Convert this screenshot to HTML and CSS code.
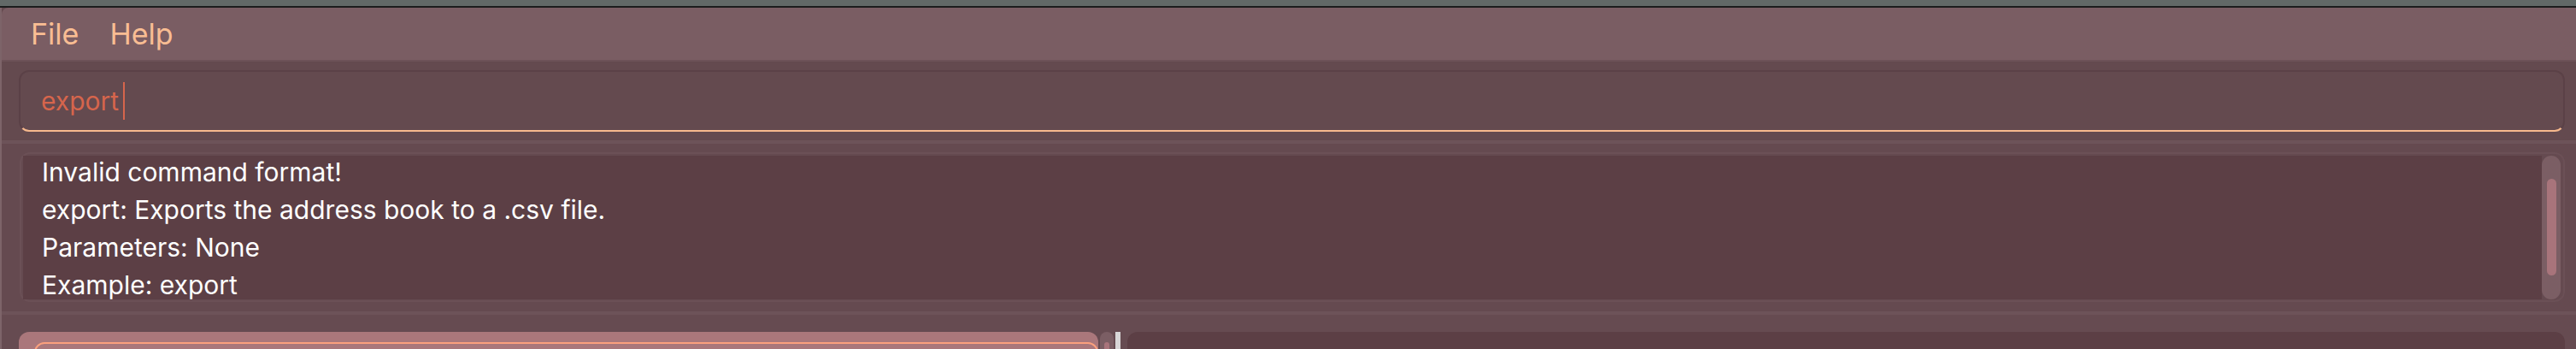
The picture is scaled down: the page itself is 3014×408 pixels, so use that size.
FILE: index.html
```html
<!DOCTYPE html>
<html lang="en">
<head>
<meta charset="utf-8">
<title>Address Book</title>
<link rel="stylesheet" href="styles.css">
</head>
<body>
<div class="titlebar"></div>
<div class="app">
  <div class="menubar">
    <span class="menu-item">File</span>
    <span class="menu-item">Help</span>
  </div>
  <div class="command-area">
    <div class="command-field">
      <span class="command-text">export</span><span class="caret"></span>
    </div>
  </div>
  <div class="separator"></div>
  <div class="result-area">
    <div class="result-panel">
      <div class="result-text">
        <div class="result-lines">
          <div>Invalid command format!</div>
          <div>export: Exports the address book to a .csv file.</div>
          <div>Parameters: None</div>
          <div>Example: export</div>
        </div>
      </div>
      <div class="scroll-track"><div class="scroll-thumb"></div></div>
    </div>
  </div>
  <div class="separator"></div>
  <div class="bottom-area">
    <div class="list-panel">
      <div class="person-card"></div>
    </div>
    <div class="list-scroll"><div class="list-scroll-thumb"></div></div>
    <div class="divider"></div>
    <div class="detail-panel"></div>
  </div>
</div>
</body>
</html>
```
FILE: styles.css
```css
* { box-sizing: border-box; }

html, body {
  margin: 0;
  padding: 0;
  width: 3014px;
  height: 408px;
  overflow: hidden;
  background: #644a4f;
  font-family: Inter, "Open Sans", sans-serif;
}

.titlebar {
  height: 9px;
  background: #626967;
  border-bottom: 2px solid #1c1d1d;
}

.app {
  border-left: 2px solid #7d6469;
  display: flex;
  flex-direction: column;
  height: 399px;
}

.app > * { flex-shrink: 0; }

.menubar {
  height: 63px;
  background: #7a5d63;
  border-top-left-radius: 8px;
  border-bottom: 2px solid #6d5258;
  display: flex;
  align-items: center;
  gap: 36px;
  padding-left: 34px;
}

.menu-item {
  color: #f9bd93;
  font-size: 34px;
  line-height: 1;
}

.command-area {
  height: 92px;
  background: #644a4f;
  padding: 10px 13px 10px 20px;
}

.command-field {
  height: 72px;
  border: 2px solid #5b4147;
  border-bottom: 2px solid #f7b98d;
  border-radius: 12px;
  display: flex;
  align-items: center;
  padding-left: 24px;
}

.command-text {
  color: #d6654c;
  font-size: 30px;
  line-height: 1;
}

.caret {
  display: inline-block;
  width: 2px;
  height: 44px;
  margin-left: 5px;
  background: #d6654c;
}

.separator {
  height: 4px;
  background: #6d5359;
}

.result-area {
  height: 196px;
  background: #654a50;
  padding: 10px 13px 11px 21px;
}

.result-panel {
  height: 175px;
  border: 2px solid #6b5056;
  border-radius: 12px;
  padding: 2px 3px 1px 2px;
  display: flex;
  background: #654a50;
}

.result-text {
  flex: 1;
  background: #5c3f45;
  overflow: hidden;
  padding-left: 22px;
}

.result-lines {
  margin-top: -3px;
  color: #ffffff;
  font-size: 30px;
  line-height: 44px;
}

.scroll-track {
  width: 22px;
  background: #7b5e64;
  border-radius: 11px;
  padding: 27px 5px 0 6px;
}

.scroll-thumb {
  height: 113px;
  background: #a8747b;
  border-radius: 6px;
}

.bottom-area {
  flex: 1 1 auto;
  min-height: 0;
  overflow: hidden;
  background: #664b51;
  display: flex;
  padding: 20px 13px 0 20px;
}

.list-panel {
  width: 1263px;
  background: #aa777b;
  border-radius: 12px 12px 0 0;
  padding: 12px 0 0 18px;
}

.person-card {
  height: 40px;
  border: 2px solid #fba07d;
  border-radius: 12px 12px 0 0;
}

.list-scroll {
  width: 16px;
  margin-left: 2px;
  background: #7b5e64;
  border-radius: 8px 8px 0 0;
  padding: 12px 5px 0 5px;
}

.list-scroll-thumb {
  height: 40px;
  background: #a8747b;
  border-radius: 3px 3px 0 0;
}

.divider {
  width: 6px;
  margin-left: 2px;
  background: #d8d6d7;
}

.detail-panel {
  flex: 1;
  margin-left: 8px;
  background: #5c3f45;
  border-radius: 12px 12px 0 0;
}
```
